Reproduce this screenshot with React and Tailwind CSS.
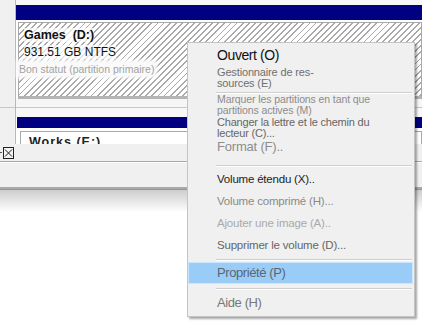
import React from 'react';

function Sep({ className }) {
  return (
    <div className={className}>
      <div className="ml-[28px] mr-[2px] h-[2px] border-t border-[#cfcfcf] border-b border-b-white" />
    </div>
  );
}

function ContextMenu() {
  return (
    <div className="absolute left-[187px] top-[42px] w-[228px] h-[275px] bg-[#f0f0f0] border border-[#c4c4c4] shadow-[2px_2px_2px_rgba(0,0,0,0.35)] pt-[1px] font-['Liberation_Sans',Arial,sans-serif]">
      {/* Open */}
      <div className="h-[22px] pl-[29px] flex items-center text-[14px] tracking-[-0.4px] text-[#111]">
        Ouvert (O)
      </div>
      <div className="h-[22px] pl-[29px] pt-[1px] text-[11px] leading-[10.5px] tracking-[-0.15px] text-[#6f6f6f]">
        Gestionnaire de res-<br />sources (E)
      </div>
      <Sep className="pt-[4px]" />

      <div className="pl-[29px] text-[10.5px] leading-[10.5px] tracking-[-0.1px] text-[#8c8c8c]">
        Marquer les partitions en tant que<br />partitions actives (M)
      </div>
      <div className="pl-[29px] mt-[2px] text-[11px] leading-[10.5px] tracking-[-0.2px] text-[#666]">
        Changer la lettre et le chemin du<br />lecteur (C)...
      </div>
      <div className="h-[18px] pl-[29px] flex items-center text-[13px] tracking-[-0.2px] text-[#8d8d8d]">
        Format (F)..
      </div>
      <Sep className="pt-[9px] pb-[2px]" />

      <div className="h-[22px] pl-[29px] flex items-center text-[11.5px] tracking-[-0.2px] text-[#222]">
        Volume étendu (X)..
      </div>
      <div className="h-[22px] pl-[29px] flex items-center text-[11.5px] tracking-[-0.2px] text-[#8a8a8a]">
        Volume comprimé (H)...
      </div>
      <div className="h-[22px] pl-[29px] flex items-center text-[11.5px] tracking-[-0.2px] text-[#aaaaaa]">
        Ajouter une image (A)..
      </div>
      <div className="h-[22px] pl-[29px] flex items-center text-[11.5px] tracking-[-0.2px] text-[#666]">
        Supprimer le volume (D)...
      </div>
      <Sep className="pt-[2px] pb-[1px]" />

      <div className="h-[22px] mr-[1px] pl-[28px] flex items-center bg-[#99cdf7] border border-[#cde6fb] text-[13px] tracking-[-0.4px] text-[#5a6672]">
        Propriété (P)
      </div>
      <Sep className="pt-[4px] pb-[4px]" />

      <div className="h-[18px] pl-[29px] flex items-center text-[13px] tracking-[-0.4px] text-[#777]">
        Aide (H)
      </div>
    </div>
  );
}

export default function App() {
  return (
    <div className="relative w-[422px] h-[322px] overflow-hidden bg-white font-['Liberation_Sans',Arial,sans-serif]">
      {/* disk list */}
      <div className="h-[144px] flex overflow-hidden">
        <div className="w-[16px] shrink-0 bg-[#f0f0f0] border-r border-[#b8b8b8]">
          <div className="h-[107px]" />
          <div className="h-px bg-[#c8c8c8]" />
        </div>

        <div className="flex-1 bg-white">
          <div className="h-[5px] bg-[#f7f7f7]" />
          <div className="h-[15px] bg-[#000080]" />
          <div className="h-[2px]" />
          <div className="h-[77px] ml-[2px] border border-[#a8a8a8] border-b-[3px] border-b-[#b4b4b4] bg-[repeating-linear-gradient(135deg,#ffffff_0px,#ffffff_3px,#a9a9a9_3px,#a9a9a9_4.3px)]">
            <div className="pl-[5px] pt-[5px] text-[12.5px] leading-[15px] font-bold text-[#111] whitespace-pre">
              <span className="bg-white/70">Games  (D:)</span>
            </div>
            <div className="pl-[5px] pt-[2px] text-[12px] leading-[15px] text-[#111]">
              <span className="bg-white/70">931.51 GB NTFS</span>
            </div>
            <div className="pt-[3px] text-[10.5px] leading-[13px] text-[#a3a3a3]">
              <span className="bg-[#fafafa] shadow-[0_0_3px_3px_#fafafa]">Bon statut (partition primaire)</span>
            </div>
          </div>
          <div className="h-[8px] bg-[#f6f6f6]" />
          <div className="h-px bg-[#c8c8c8]" />
          <div className="h-[9px] bg-[#f8f8f8]" />
          <div className="h-[11px] ml-[1px] bg-[#000080]" />
          <div className="h-[3px]" />
          <div className="ml-[4px] h-[24px] border border-[#a8a8a8] bg-white pl-[8px] pt-[3px] text-[12.5px] leading-[15px] font-bold text-[#222] tracking-[1px]">
            Works (E:)
          </div>
        </div>
      </div>

      {/* lower toolbar panel */}
      <div className="h-[46px] flex flex-col bg-[#f0f0f0]">
        <div className="h-[18px] shrink-0 flex items-center gap-[1px] border-b border-[#a8a8a8]">
          <div className="w-[2px] h-px bg-[#555]" />
          <svg width="11" height="12" viewBox="0 0 11 12">
            <rect x="0.5" y="0.5" width="10" height="11" fill="#f4f4f4" stroke="#222" />
            <path d="M2 2.5 L9 9.5 M9 2.5 L2 9.5" stroke="#222" strokeWidth="1" />
          </svg>
        </div>
        <div className="flex-1 border-t border-white" />
        <div className="h-[2px] shrink-0 bg-[#a9a9a9]" />
        <div className="h-px shrink-0 bg-[#6b9fe0]" />
      </div>
      <div className="h-[22px] bg-linear-to-b from-[#cdcdcd] to-white" />

      <ContextMenu />
    </div>
  );
}
